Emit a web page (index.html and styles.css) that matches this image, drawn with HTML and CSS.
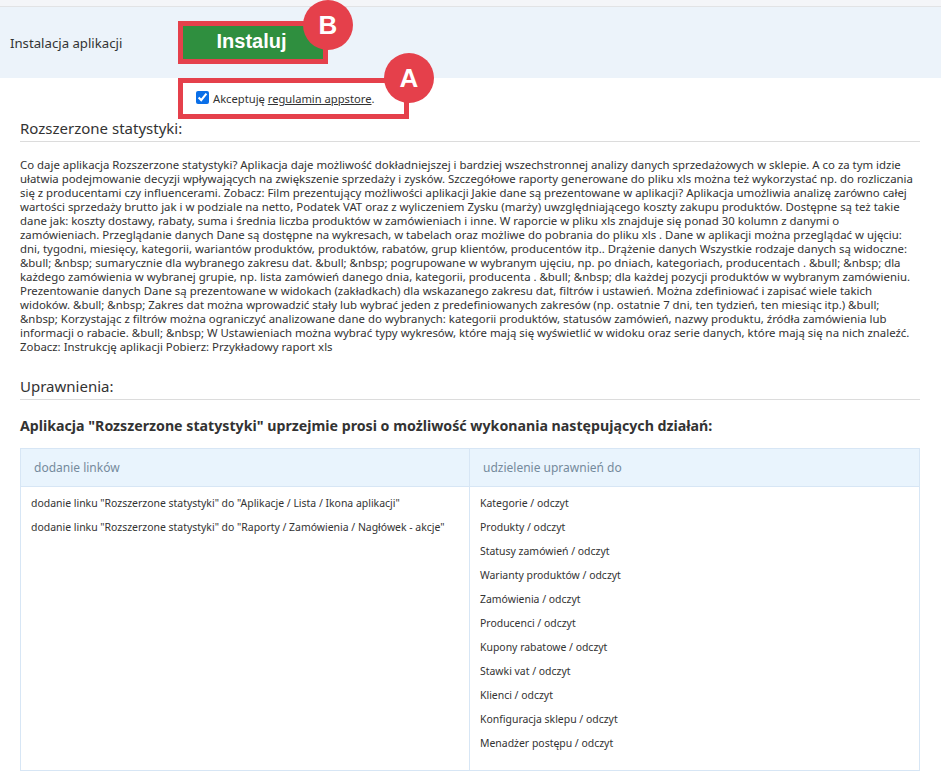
FILE: index.html
```html
<!DOCTYPE html>
<html lang="pl">
<head>
<meta charset="utf-8">
<title>Instalacja aplikacji</title>
<link rel="stylesheet" href="styles.css">
</head>
<body>
<div class="strip"></div>
<section class="band">
  <div class="band-label">Instalacja aplikacji</div>
  <div class="btn-wrap">
    <button class="install" type="button">Instaluj</button>
    <span class="badge badge-b">B</span>
  </div>
</section>
<div class="accept-row">
  <label class="accept">
    <input type="checkbox" checked>
    <span>Akceptuję <a href="#">regulamin appstore</a>.</span>
  </label>
  <span class="badge badge-a">A</span>
</div>
<main class="content">
  <h2 class="title">Rozszerzone statystyki:</h2>
  <p class="desc">Co daje aplikacja Rozszerzone statystyki? Aplikacja daje możliwość dokładniejszej i bardziej wszechstronnej analizy danych sprzedażowych w sklepie. A co za tym idzie<br>
ułatwia podejmowanie decyzji wpływających na zwiększenie sprzedaży i zysków. Szczegółowe raporty generowane do pliku xls można też wykorzystać np. do rozliczania<br>
się z producentami czy influencerami. Zobacz: Film prezentujący możliwości aplikacji Jakie dane są prezentowane w aplikacji? Aplikacja umożliwia analizę zarówno całej<br>
wartości sprzedaży brutto jak i w podziale na netto, Podatek VAT oraz z wyliczeniem Zysku (marży) uwzględniającego koszty zakupu produktów. Dostępne są też takie<br>
dane jak: koszty dostawy, rabaty, suma i średnia liczba produktów w zamówieniach i inne. W raporcie w pliku xls znajduje się ponad 30 kolumn z danymi o<br>
zamówieniach. Przeglądanie danych Dane są dostępne na wykresach, w tabelach oraz możliwe do pobrania do pliku xls . Dane w aplikacji można przeglądać w ujęciu:<br>
dni, tygodni, miesięcy, kategorii, wariantów produktów, produktów, rabatów, grup klientów, producentów itp.. Drążenie danych Wszystkie rodzaje danych są widoczne:<br>
&amp;bull; &amp;nbsp; sumarycznie dla wybranego zakresu dat. &amp;bull; &amp;nbsp; pogrupowane w wybranym ujęciu, np. po dniach, kategoriach, producentach . &amp;bull; &amp;nbsp; dla<br>
każdego zamówienia w wybranej grupie, np. lista zamówień danego dnia, kategorii, producenta . &amp;bull; &amp;nbsp; dla każdej pozycji produktów w wybranym zamówieniu.<br>
Prezentowanie danych Dane są prezentowane w widokach (zakładkach) dla wskazanego zakresu dat, filtrów i ustawień. Można zdefiniować i zapisać wiele takich<br>
widoków. &amp;bull; &amp;nbsp; Zakres dat można wprowadzić stały lub wybrać jeden z predefiniowanych zakresów (np. ostatnie 7 dni, ten tydzień, ten miesiąc itp.) &amp;bull;<br>
&amp;nbsp; Korzystając z filtrów można ograniczyć analizowane dane do wybranych: kategorii produktów, statusów zamówień, nazwy produktu, źródła zamówienia lub<br>
informacji o rabacie. &amp;bull; &amp;nbsp; W Ustawieniach można wybrać typy wykresów, które mają się wyświetlić w widoku oraz serie danych, które mają się na nich znaleźć.<br>
Zobacz: Instrukcję aplikacji Pobierz: Przykładowy raport xls</p>
  <h2 class="title perms">Uprawnienia:</h2>
  <h3 class="ask">Aplikacja "Rozszerzone statystyki" uprzejmie prosi o możliwość wykonania następujących działań:</h3>
  <div class="grid">
    <div class="head">dodanie linków</div>
    <div class="head">udzielenie uprawnień do</div>
    <ul class="cell">
      <li>dodanie linku "Rozszerzone statystyki" do "Aplikacje / Lista / Ikona aplikacji"</li>
      <li>dodanie linku "Rozszerzone statystyki" do "Raporty / Zamówienia / Nagłówek - akcje"</li>
    </ul>
    <ul class="cell">
      <li>Kategorie / odczyt</li>
      <li>Produkty / odczyt</li>
      <li>Statusy zamówień / odczyt</li>
      <li>Warianty produktów / odczyt</li>
      <li>Zamówienia / odczyt</li>
      <li>Producenci / odczyt</li>
      <li>Kupony rabatowe / odczyt</li>
      <li>Stawki vat / odczyt</li>
      <li>Klienci / odczyt</li>
      <li>Konfiguracja sklepu / odczyt</li>
      <li>Menadżer postępu / odczyt</li>
    </ul>
  </div>
</main>
</body>
</html>
```
FILE: styles.css
```css
* { box-sizing: border-box; }
html, body { margin: 0; padding: 0; }
body {
  width: 941px;
  height: 780px;
  overflow: hidden;
  background: #fff;
  color: #333;
  font-family: "Noto Sans", "Liberation Sans", sans-serif;
  font-size: 12px;
}
.strip {
  height: 7px;
  background: #f4f5f8;
  border-bottom: 1px solid #e2e3e5;
}
.band {
  height: 71px;
  background: #ecf3fa;
  display: flex;
  align-items: flex-start;
}
.band-label {
  width: 178px;
  padding: 29px 0 0 10px;
  font-size: 13.2px;
  line-height: 15px;
  color: #333;
}
.btn-wrap { position: relative; margin-top: 14px; }
.install {
  display: block;
  width: 150px;
  height: 43px;
  padding: 0 3px 3px 0;
  background: #2f8f3f;
  border: 5px solid #e5404b;
  color: #fff;
  font-family: "Liberation Sans", sans-serif;
  font-size: 20px;
  font-weight: 700;
}
.badge {
  position: absolute;
  width: 50px;
  height: 50px;
  border-radius: 50%;
  background: #e5404b;
  color: #fff;
  font-family: "Liberation Sans", sans-serif;
  font-size: 26px;
  font-weight: 700;
  line-height: 50px;
  text-align: center;
}
.badge-b { left: 125px; top: -21px; }
.accept-row {
  position: relative;
  margin-left: 178px;
  width: 231px;
  height: 41px;
}
.accept {
  display: flex;
  align-items: center;
  height: 41px;
  padding: 0 0 0 13px;
  border: 5px solid #e5404b;
  font-size: 11.2px;
  color: #333;
}
.accept input {
  width: 13px;
  height: 13px;
  margin: 0 4px 2px 0;
  accent-color: #0a6fe8;
}
.accept a { color: #333; }
.badge-a { right: -25px; top: -25px; }
.content { padding: 0 21px 0 20px; }
.title {
  margin: 0;
  height: 23px;
  border-bottom: 1px solid #dcdcdc;
  font-size: 15px;
  font-weight: 400;
  line-height: 19px;
  color: #333;
}
.desc {
  margin: 16px 0 0;
  font-size: 11.4px;
  line-height: 14px;
  white-space: nowrap;
  color: #333;
}
.perms { margin-top: 23px; }
.ask {
  margin: 16px 0 0;
  font-size: 14.2px;
  font-weight: 700;
  line-height: 20px;
  color: #333;
}
.grid {
  margin-top: 12px;
  display: grid;
  grid-template-columns: 449px 449px;
  grid-template-rows: 38px 283px;
  border: 1px solid #d7e6f5;
}
.head {
  background: #e9f4fd;
  border-bottom: 1px solid #d7e6f5;
  padding: 0 13px;
  line-height: 37px;
  color: #758a9c;
}
.head:first-child, .cell:nth-child(3) { border-right: 1px solid #d7e6f5; }
.cell {
  list-style: none;
  margin: 0;
  padding: 4px 10px 0;
}
.cell li {
  height: 24px;
  line-height: 24px;
  font-size: 10.45px;
  white-space: nowrap;
}
```
